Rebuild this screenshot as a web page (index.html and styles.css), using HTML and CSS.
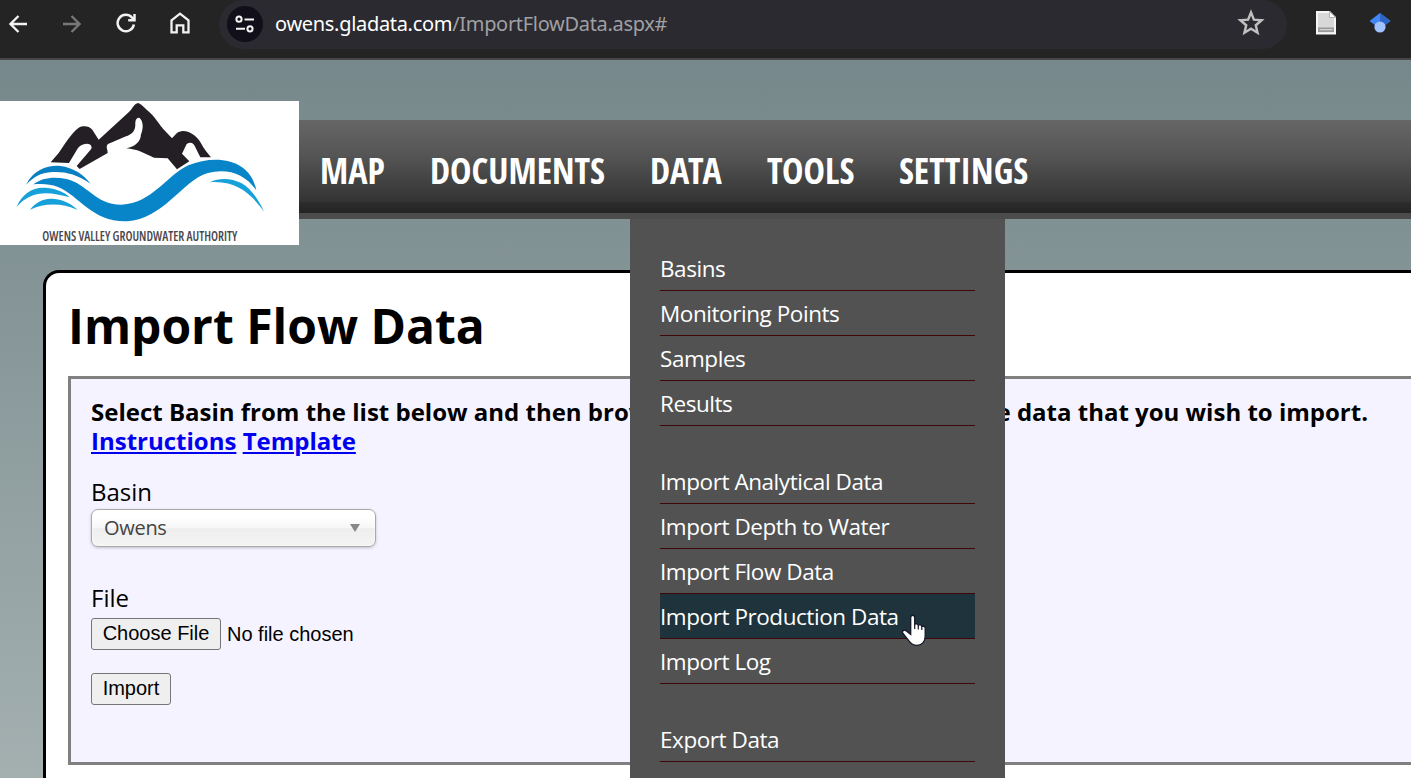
FILE: index.html
```
<!DOCTYPE html>
<html lang="en">
<head>
<meta charset="utf-8">
<title>Import Flow Data</title>
<link rel="stylesheet" href="styles.css">
</head>
<body>
<div class="browser">
  <svg class="nav-icon back" viewBox="0 0 18 18"><path d="M18 9H2M9.500 1L1.500 9l8 8"/></svg>
  <svg class="nav-icon forward" viewBox="0 0 18 18"><path d="M0 9h16M8.500 1l8 8-8 8"/></svg>
  <svg class="nav-icon reload" viewBox="0 0 20 20"><path d="M17.900 11.500A8.200 8.200 0 1 1 16 4.600L18.300 7M18.500 1v6.300h-6.300"/></svg>
  <svg class="nav-icon home" viewBox="0 0 20 22"><path d="M1.500 8.300L10 1.700l8.500 6.600v12h-5.200v-7H6.700v7H1.500z"/></svg>
  <div class="address">
    <span class="site-info"><svg viewBox="0 0 20 18"><path d="M9.500 4.500h9.500M1 13.800h9"/><circle cx="4" cy="4.200" r="2.600"/><circle cx="15" cy="13.800" r="2.600"/></svg></span>
    <span class="url">owens.gladata.com<span class="path">/ImportFlowData.aspx#</span></span>
    <svg class="star" viewBox="0 0 24 24"><path d="M12 3l2.500 6.100 6.600.5-5 4.300 1.500 6.400L12 16.900l-5.600 3.400 1.500-6.400-5-4.300 6.600-.5z"/></svg>
  </div>
  <svg class="ext doc" viewBox="0 0 22 26"><path d="M2 2h12.500l5.500 5.500v16H2z" fill="#d8d8d8" stroke="#f5f5f5" stroke-width="2"/><path d="M14.500 1.500v6h6z" fill="#fff" stroke="#999" stroke-width=".7"/><path d="M3 17.500h16v4.500H3z" fill="#999"/><path d="M4.500 19.700h13" stroke="#ddd"/></svg>
  <svg class="ext scholar" viewBox="0 0 22 20"><path d="M11 0L.5 8l6 4.500h9l6-4.500z" fill="#4285f4"/><path d="M11 0l10.500 8-6 4.500L11 9z" fill="#2d65c4"/><circle cx="11" cy="14" r="5.600" fill="#a0c3ff"/></svg>
</div>
<div class="site">
  <header class="header">
    <svg class="logo" viewBox="0 18 897 432">
      <path fill="#fff" d="M0 18h897v432H0z"/>
      <path fill="#231f25" d="M152 202L176 174C195 146 217 111 236 98C249 91 267 92 277 104L296 134L386 52C397 43 401 26 415 24C428 30 436 42 451 54C470 73 478 89 489 101L516 130C526 119 533 108 549 108C572 109 592 124 603 145C612 162 622 174 633 187L601 187L586 157C582 145 572 139 560 147L546 176L568 199L531 223L503 190L462 188C433 175 411 162 379 160C405 154 421 143 423 118C430 101 431 79 418 68C409 67 405 76 406 90C405 111 393 119 378 124L324 147C316 155 323 162 323 174L239 222L230 213L273 163C278 155 272 146 261 146C243 148 236 154 229 167L207 204Z"/>
      <path fill="#087fc3" d="M78 269C102 223 144 210 181 213C221 218 250 239 272 266C230 237 194 229 157 231C120 233 101 247 78 269Z"/>
      <path fill="#0785c8" d="M100 268C127 248 160 244 199 252C262 266 286 330 365 329C456 325 497 244 565 211C649 176 752 192 769 286C733 234 679 219 621 235C549 257 488 374 381 379C277 382 239 303 174 276C149 266 126 266 100 268Z"/>
      <path fill="#16a1da" d="M49 337C68 292 103 273 143 279C173 283 193 291 209 307C145 288 92 285 49 337ZM90 344C111 318 136 308 164 312C192 315 216 328 233 345C183 322 132 324 90 344ZM629 262C659 248 693 249 725 265C752 279 776 315 792 350C758 303 713 255 629 262Z"/>
      <text x="127" y="438" textLength="585" lengthAdjust="spacingAndGlyphs">OWENS VALLEY GROUNDWATER AUTHORITY</text>
    </svg>
    <nav class="menu">
      <a class="map">MAP</a><a class="documents">DOCUMENTS</a><a class="data">DATA</a><a class="tools">TOOLS</a><a class="settings">SETTINGS</a>
    </nav>
    <div class="dropdown">
      <ul><li>Basins</li><li>Monitoring Points</li><li>Samples</li><li>Results</li></ul>
      <ul><li>Import Analytical Data</li><li>Import Depth to Water</li><li>Import Flow Data</li><li class="hover">Import Production Data</li><li>Import Log</li></ul>
      <ul><li>Export Data</li></ul>
    </div>
  </header>
  <main class="content">
    <h1>Import Flow Data</h1>
    <section class="panel">
      <div class="intro"><div class="sentence"><span>Select Basin from the list below and then browse</span><span>for the file containing the data that you wish to import.</span></div><div><a href="#">Instructions</a> <a href="#">Template</a></div></div>
      <div class="label">Basin</div>
      <div class="select"><span>Owens</span><svg viewBox="0 0 10 8"><path d="M0 0h10L5 8z"/></svg></div>
      <div class="label file-label">File</div>
      <div class="file"><button class="choose">Choose File</button><span>No file chosen</span></div>
      <button class="import">Import</button>
    </section>
  </main>
</div>
<svg class="cursor" viewBox="0 0 28 34"><path d="M9.700 3.500c0-3 4-3 4 0v6.800c1-.8 3.300-.4 3.600 1 1.100-.9 3.300-.3 3.500 1.100 1.400-.7 3.400.1 3.400 1.900v8c0 5.500-3.500 9-8.500 9-3.400 0-5.500-1.400-7.600-4.200L2 19.500c-1.600-2.400 1-4.300 3-2.700l4.700 3.600z" fill="#fff" stroke="#141827" stroke-width="1.300"/><path d="M13.700 10v5M17.300 11.500V15.500M20.800 12.500V16" stroke="#141827" stroke-width="1.200"/></svg>
</body>
</html>
```
FILE: styles.css
```
* { box-sizing: border-box; }
body { margin: 0; height: 778px; overflow: hidden; position: relative; font-family: "Open Sans", "Noto Sans", sans-serif; color: #000; }
svg { display: block; flex: none; }
.browser { height: 60px; background: #242424; border-bottom: 2px solid #47474a; display: flex; align-items: flex-start; }
.nav-icon { fill: none; stroke: #f2f2f2; stroke-width: 2.3; }
.back { width: 18px; height: 18px; margin: 15px 0 0 9px; }
.forward { width: 18px; height: 18px; margin: 15px 0 0 36px; stroke: #777; }
.reload { width: 20px; height: 20px; margin: 13px 0 0 35px; stroke-width: 2.5; }
.home { width: 20px; height: 22px; margin: 12px 0 0 34px; }
.address { width: 1068px; height: 49px; margin-left: 29px; background: #2a2a30; display: flex; align-items: center; border-radius: 25px; }
.site-info { width: 36px; height: 36px; margin-left: 8px; margin-top: -2px; border-radius: 50%; background: #11101a; display: grid; place-items: center; }
.site-info svg { width: 20px; height: 18px; fill: none; stroke: #f5f5f5; stroke-width: 2; }
.url { margin: -2px 0 0 12px; font: 20px/26px "Noto Sans", sans-serif; letter-spacing: -.31px; color: #fff; white-space: nowrap; width: 964px; }
.path { color: #a0a0a4; }
.star { width: 28px; height: 28px; margin-left: -2px; margin-top: -3px; fill: none; stroke: #c0c0c0; stroke-width: 2.1; }
.ext.doc { width: 22px; height: 26px; margin: 10px 0 0 28px; }
.ext.scholar { width: 22px; height: 20px; margin: 13px 0 0 32px; }
.site { height: 718px; overflow: hidden; background: linear-gradient(#76888b, #a4b0b0); }
.header { height: 210px; padding-top: 60px; position: relative; }
.logo { position: absolute; left: 0; top: 41px; width: 299px; height: 144px; z-index: 2; }
.logo text { font: 600 44px "Open Sans", sans-serif; font-stretch: 75%; fill: #4a464c; }
.menu { height: 99px; padding: 22px 0 0 320px; border-bottom: 6px solid #4c4c4c; background: linear-gradient(#666, #555 38%, #333 88%, #2c2c2c 89%, #242424); color: #fff; display: flex; font: bold 36px/58px "Open Sans Condensed", "Open Sans", sans-serif; font-stretch: 75%; }
.menu a { white-space: nowrap; }
.map { width: 110px; } .documents { width: 220px; } .data { width: 117px; } .tools { width: 132px; }
.dropdown { position: absolute; z-index: 3; left: 630px; top: 159px; width: 375px; height: 559px; background: #525252; padding: 27px 30px 0; color: #fff; font-size: 22.5px; letter-spacing: -.44px; }
.dropdown ul { list-style: none; margin: 0 0 33px; padding: 0; }
.dropdown li { height: 45px; line-height: 46px; border-bottom: 1px solid #3e0808; white-space: nowrap; }
.dropdown .hover { background: #1e333b; }
.content { margin-left: 43px; height: 508px; background: #fff; border: solid #000; border-width: 3px 0 0 3px; border-radius: 16px 0 0 0; padding: 20px 0 0 22px; }
h1 { margin: 0 0 18px; font-size: 48px; line-height: 65px; font-weight: bold; }
.panel { height: 389px; border: 3px solid #808080; border-right: 0; background: #f5f3ff; padding: 18px 20px; }
.intro { font-size: 24px; line-height: 29px; font-weight: bold; white-space: nowrap; }
.sentence { display: flex; justify-content: space-between; width: 1277px; }
.intro a { color: #00e; text-decoration: underline; }
.label { margin-top: 20px; font-size: 24px; line-height: 33px; }
.select { width: 285px; height: 38px; margin-top: 1px; border: 1px solid #aaa; border-radius: 7px; background: linear-gradient(#fff 20%, #f6f6f6 50%, #eee 52%, #f4f4f4); box-shadow: 0 1px 3px rgba(0,0,0,.22), inset 0 0 3px #fff; color: #444; font-size: 20px; letter-spacing: -.3px; display: flex; align-items: center; justify-content: space-between; padding: 0 15px 1px 12px; }
.select svg { width: 10px; height: 8px; fill: #888; }
.file-label { margin-top: 34px; }
button { height: 32px; border: 1px solid #767676; border-radius: 3px; background: #efefef; padding: 0 0 2px; font: 20px/28px "Liberation Sans", Arial, sans-serif; color: #000; }
.file { display: flex; align-items: center; gap: 6px; margin: 4px 0 23px; font: 20px/32px "Liberation Sans", Arial, sans-serif; }
.choose { width: 130px; }
.import { display: block; width: 80px; }
.cursor { position: absolute; z-index: 5; left: 901px; top: 614px; width: 28px; height: 34px; fill: none; }
```
